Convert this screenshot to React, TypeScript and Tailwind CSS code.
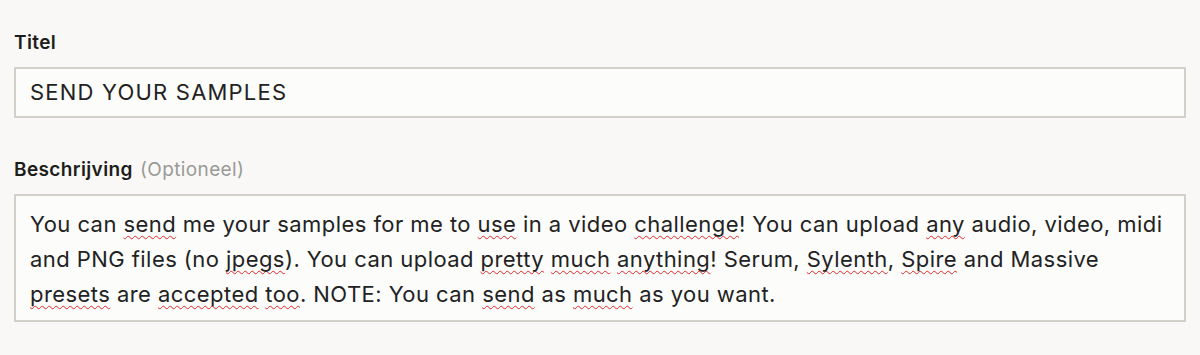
import React from 'react';

const font = { fontFamily: 'Inter, "Noto Sans", sans-serif' };

// words the browser's (Dutch) spell checker flagged in the screenshot
const Typo: React.FC<{ children: React.ReactNode }> = ({ children }) => (
  <span className="underline decoration-wavy decoration-[#e3262b] decoration-1 underline-offset-[3px] [text-decoration-skip-ink:none]">
    {children}
  </span>
);

export default function App() {
  return (
    <div className="min-h-[355px] w-full bg-[#f9f8f6] px-[14px] pt-[31px] text-[#1d1d1b]" style={font}>
      <label className="block text-[19px] font-semibold leading-6 tracking-[0.02em]">Titel</label>
      <div className="mt-[12px] flex h-[51px] items-center border-2 border-[#d2d0c8] bg-[#fcfcfb] px-[14px] text-[22px] tracking-[0.055em] text-[#222]">
        SEND YOUR SAMPLES
      </div>

      <label className="mt-[40px] block text-[19px] font-semibold leading-6 tracking-[0.02em]">
        Beschrijving <span className="ml-[2px] font-normal text-[#9a9a96]">(Optioneel)</span>
      </label>
      <div className="mt-[12px] h-[128px] whitespace-nowrap border-2 border-[#d2d0c8] bg-[#fcfcfb] px-[14px] pt-[11px] text-[22px] leading-[35px] tracking-[0.02em] text-[#222]">
        You can <Typo>send</Typo> me your samples for me to <Typo>use</Typo> in a video <Typo>challenge</Typo>! You can
        upload <Typo>any</Typo> audio, video, midi
        <br />
        and PNG files (no <Typo>jpegs</Typo>). You can upload <Typo>pretty</Typo> <Typo>much</Typo>{' '}
        <Typo>anything</Typo>! Serum, <Typo>Sylenth</Typo>, <Typo>Spire</Typo> and Massive
        <br />
        <Typo>presets</Typo> are <Typo>accepted</Typo> <Typo>too</Typo>. NOTE: You can <Typo>send</Typo> as{' '}
        <Typo>much</Typo> as you want.
      </div>
    </div>
  );
}
